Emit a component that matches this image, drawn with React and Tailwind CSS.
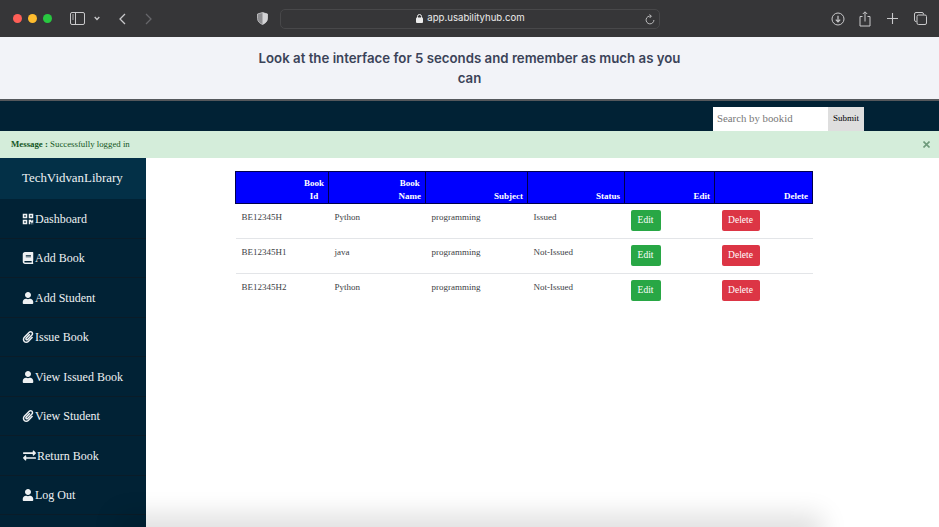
import React from "react";
import { FaQrcode, FaBook, FaUser, FaPaperclip, FaExchangeAlt } from "react-icons/fa";

const menu = [
  [FaQrcode, "Dashboard", 12, ""],
  [FaBook, "Add Book", 12, ""],
  [FaUser, "Add Student", 12, ""],
  [FaPaperclip, "Issue Book", 12, ""],
  [FaUser, "View Issued Book", 12, ""],
  [FaPaperclip, "View Student", 12, ""],
  [FaExchangeAlt, "Return Book", 13, "ml-[1px]"],
  [FaUser, "Log Out", 12, ""],
];

const rows = [
  ["BE12345H", "Python", "programming", "Issued"],
  ["BE12345H1", "java", "programming", "Not-Issued"],
  ["BE12345H2", "Python", "programming", "Not-Issued"],
];

function Toolbar() {
  return (
    <div className="h-[37px] shrink-0 bg-[#363638] flex items-center text-[#c9c9cb]">
      <div className="flex items-center gap-[6px] ml-[13px]">
        <span className="w-[9px] h-[9px] rounded-full bg-[#ff5f57]" />
        <span className="w-[9px] h-[9px] rounded-full bg-[#febc2e]" />
        <span className="w-[9px] h-[9px] rounded-full bg-[#28c840]" />
      </div>
      <svg className="ml-[18px]" width="15" height="13" viewBox="0 0 15 13" fill="none" stroke="currentColor">
        <rect x="0.5" y="0.5" width="14" height="12" rx="1.5" />
        <path d="M5.5 0.5V12.5" />
        <path d="M2 3h2M2 5h2M2 7h2" strokeWidth="0.8" />
      </svg>
      <svg className="ml-[9px]" width="6" height="5" viewBox="0 0 6 5" fill="none" stroke="currentColor" strokeWidth="1.3">
        <path d="M0.7 1L3 3.5L5.3 1" />
      </svg>
      <svg className="ml-[19px]" width="7" height="12" viewBox="0 0 7 12" fill="none" stroke="currentColor" strokeWidth="1.3">
        <path d="M6 1L1 6L6 11" />
      </svg>
      <svg className="ml-[19px]" width="7" height="12" viewBox="0 0 7 12" fill="none" stroke="#66666a" strokeWidth="1.3">
        <path d="M1 1L6 6L1 11" />
      </svg>
      <svg className="ml-[105px]" width="11" height="13" viewBox="0 0 11 13">
        <path d="M5.5 0.5L10.5 2V6.5C10.5 9.5 8 11.5 5.5 12.5C3 11.5 0.5 9.5 0.5 6.5V2Z" fill="#8d8d90" stroke="#c9c9cb" strokeWidth="0.8" />
        <path d="M5.5 0.5V12.5C8 11.5 10.5 9.5 10.5 6.5V2Z" fill="#d4d4d6" />
      </svg>
      <div className="ml-[12px] w-[380px] h-[20px] rounded-[5px] border border-[#48484a] flex items-center relative">
        <div className="flex-1 flex items-center justify-center gap-[4px] pl-[1px] text-[9.6px] text-[#ececec] font-['Inter',sans-serif]">
          <svg width="7" height="9" viewBox="0 0 7 9" fill="#ececec">
            <rect x="0" y="3.6" width="7" height="5.4" rx="1" />
            <path d="M1.5 4V2.5a2 2 0 0 1 4 0V4" fill="none" stroke="#ececec" />
          </svg>
          <span>app.usabilityhub.com</span>
        </div>
        <svg className="absolute right-[4px] top-[4px]" width="10" height="11" viewBox="0 0 10 11" fill="none" stroke="currentColor" strokeWidth="0.9">
          <path d="M6 2.2A3.9 3.9 0 1 0 8.9 6" />
          <path d="M4.6 0.4L6.4 2.2L4.6 4" />
        </svg>
      </div>
      <svg className="ml-[171px]" width="14" height="14" viewBox="0 0 14 14" fill="none" stroke="currentColor">
        <circle cx="7" cy="7" r="6" />
        <path d="M7 3.8V9.6M4.8 7.6L7 9.8L9.2 7.6" strokeWidth="1.2" />
      </svg>
      <svg className="ml-[14px]" width="12" height="16" viewBox="0 0 12 16" fill="none" stroke="currentColor">
        <path d="M3.5 5.5H1V15H11V5.5H8.5" />
        <path d="M6 10.5V1M3.8 3L6 0.8L8.2 3" />
      </svg>
      <svg className="ml-[16px]" width="11" height="11" viewBox="0 0 11 11" fill="none" stroke="currentColor" strokeWidth="1.1">
        <path d="M5.5 0V11M0 5.5H11" />
      </svg>
      <svg className="ml-[16px]" width="13" height="13" viewBox="0 0 13 13" fill="none" stroke="currentColor">
        <path d="M2.5 9.5H2A1.5 1.5 0 0 1 .5 8V2A1.5 1.5 0 0 1 2 .5H8A1.5 1.5 0 0 1 9.5 2V2.5" />
        <rect x="3" y="3" width="9.5" height="9.5" rx="1.5" />
      </svg>
    </div>
  );
}

function HeadLabel({ lines }) {
  return (
    <span className="inline-block text-center align-bottom">
      {lines.map((l) => (
        <span key={l} className="block">{l}</span>
      ))}
    </span>
  );
}

export default function App() {
  const th = "border border-[#00004d] bg-[#0000ff] text-white text-right align-bottom font-bold pr-[4px] text-[9px] leading-[13px]";
  const td = "align-top border-t border-[#e3e5e8] pl-[6px] pt-[7px] text-[#3c4145] text-[9px] leading-[12px]";
  const btn = "h-[21px] rounded-[2px] text-white text-[9.5px] flex items-center justify-center";
  return (
    <div className="relative w-[939px] h-[527px] overflow-hidden bg-white flex flex-col font-['Liberation_Serif',serif]">
      <Toolbar />
      <div className="h-[62px] shrink-0 bg-[#f2f3f8] flex justify-center pt-[11px]">
        <p className="w-[440px] text-center font-['Inter',sans-serif] font-semibold text-[13.25px] leading-[20px] text-[#3b4358]">
          Look at the interface for 5 seconds and remember as much as you can
        </p>
      </div>
      <div className="h-[2px] shrink-0 bg-[#55585c]" />
      <div className="h-[30px] shrink-0 bg-[#012235] flex items-end justify-end pr-[75px]">
        <div className="w-[115px] h-[24px] bg-white text-[#777] text-[10.8px] flex items-center pl-[4px] pb-[1px]">Search by bookid</div>
        <div className="w-[36px] h-[24px] bg-[#dedede] text-black text-[9px] flex items-center justify-center">Submit</div>
      </div>
      <div className="h-[27px] shrink-0 bg-[#d4edda] flex items-center justify-between pl-[11px] pr-[9px] text-[#155724] text-[8.8px]">
        <span><b>Message :</b> Successfully logged in</span>
        <svg width="7" height="7" viewBox="0 0 7 7" stroke="#6e9a7b" strokeWidth="1.6">
          <path d="M0.5 0.5L6.5 6.5M6.5 0.5L0.5 6.5" />
        </svg>
      </div>
      <div className="flex-1 flex min-h-0">
        <aside className="w-[146px] shrink-0 bg-[#012235] text-[#eef1f3] flex flex-col">
          <div className="h-[41px] shrink-0 bg-[#033047] flex items-center pl-[22px] pt-[1px] text-[12.9px]">TechVidvanLibrary</div>
          {menu.map(([Icon, label, size, extra]) => (
            <div key={label} className="h-[39.5px] shrink-0 border-b border-[#0a1c28] flex items-center pl-[21.5px] pt-[1px] gap-[1.5px] text-[12px]">
              <Icon size={size} className={"shrink-0 " + extra} />
              <span>{label}</span>
            </div>
          ))}
        </aside>
        <main className="flex-1 pl-[89px] pt-[13px]">
          <table className="table-fixed border-collapse w-[577px]">
            <colgroup>
              <col className="w-[93px]" />
              <col className="w-[97px]" />
              <col className="w-[102px]" />
              <col className="w-[97px]" />
              <col className="w-[90px]" />
              <col className="w-[98px]" />
            </colgroup>
            <thead>
              <tr className="h-[32px]">
                <th className={th}><HeadLabel lines={["Book", "Id"]} /></th>
                <th className={th}><HeadLabel lines={["Book", "Name"]} /></th>
                <th className={th}>Subject</th>
                <th className={th}>Status</th>
                <th className={th}>Edit</th>
                <th className={th}>Delete</th>
              </tr>
            </thead>
            <tbody>
              {rows.map((r) => (
                <tr key={r[0]} className="h-[35px]">
                  {r.map((c, i) => (
                    <td key={i} className={td}>{c}</td>
                  ))}
                  <td className="align-top border-t border-[#e3e5e8] pl-[6px] pt-[6px]">
                    <div className={btn + " w-[30px] bg-[#28a745]"}>Edit</div>
                  </td>
                  <td className="align-top border-t border-[#e3e5e8] pl-[7px] pt-[6px]">
                    <div className={btn + " w-[38px] bg-[#dc3545]"}>Delete</div>
                  </td>
                </tr>
              ))}
            </tbody>
          </table>
        </main>
      </div>
      <div className="absolute left-[130px] top-[527px] w-[680px] h-[10px] shadow-[0_0_26px_12px_rgba(0,0,0,0.13)]" />
    </div>
  );
}
